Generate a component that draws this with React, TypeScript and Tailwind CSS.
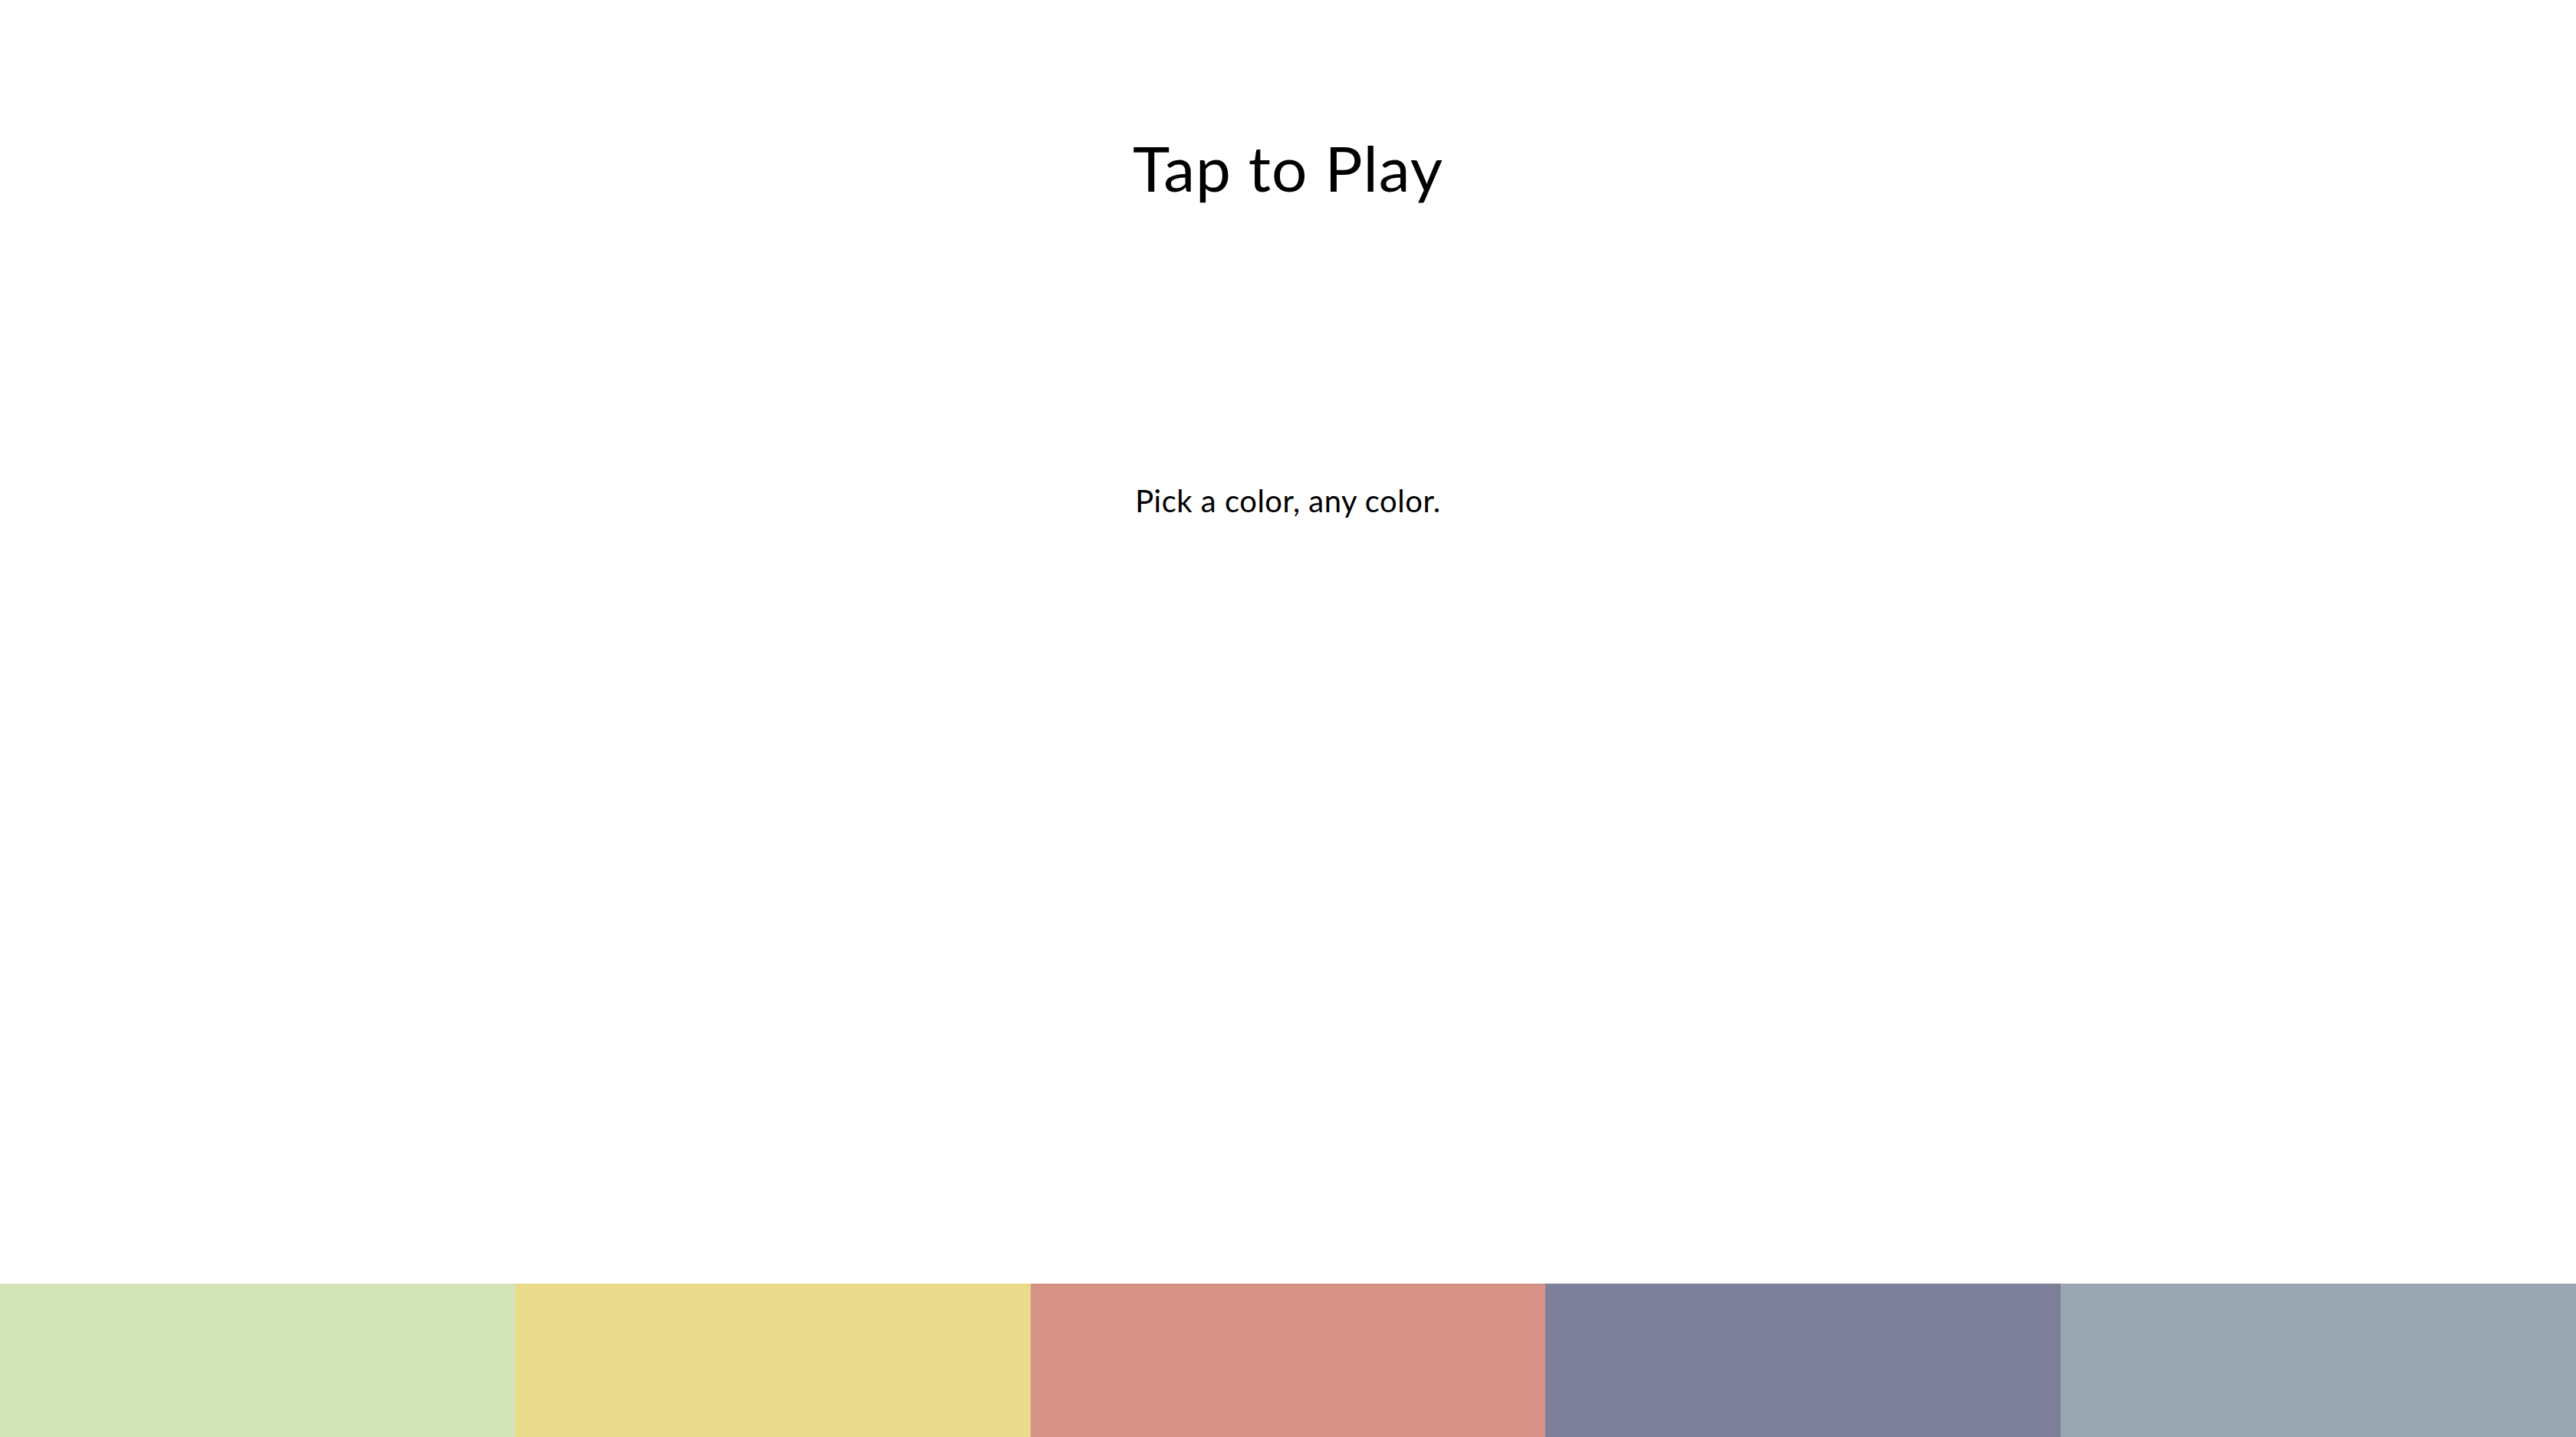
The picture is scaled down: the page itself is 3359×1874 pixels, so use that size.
import React from "react";

const colors = ["bg-[#d3e4b9]", "bg-[#eada8c]", "bg-[#d69286]", "bg-[#7d7e98]", "bg-[#9aa6b1]"];

export default function App() {
  return (
    <div className="flex h-[1874px] w-full flex-col bg-white text-black" style={{ fontFamily: "Lato, 'Open Sans', sans-serif" }}>
      <div className="flex flex-1 flex-col items-center">
        <h1 className="mt-[170px] text-[82px] leading-[96px] font-normal tracking-[1px]">Tap to Play</h1>
        <p className="mt-[363px] text-[40px] leading-[48px] tracking-[0.5px]">Pick a color, any color.</p>
      </div>
      <div className="grid h-[200px] grid-cols-5">
        {colors.map((c) => (
          <div key={c} className={c} />
        ))}
      </div>
    </div>
  );
}
